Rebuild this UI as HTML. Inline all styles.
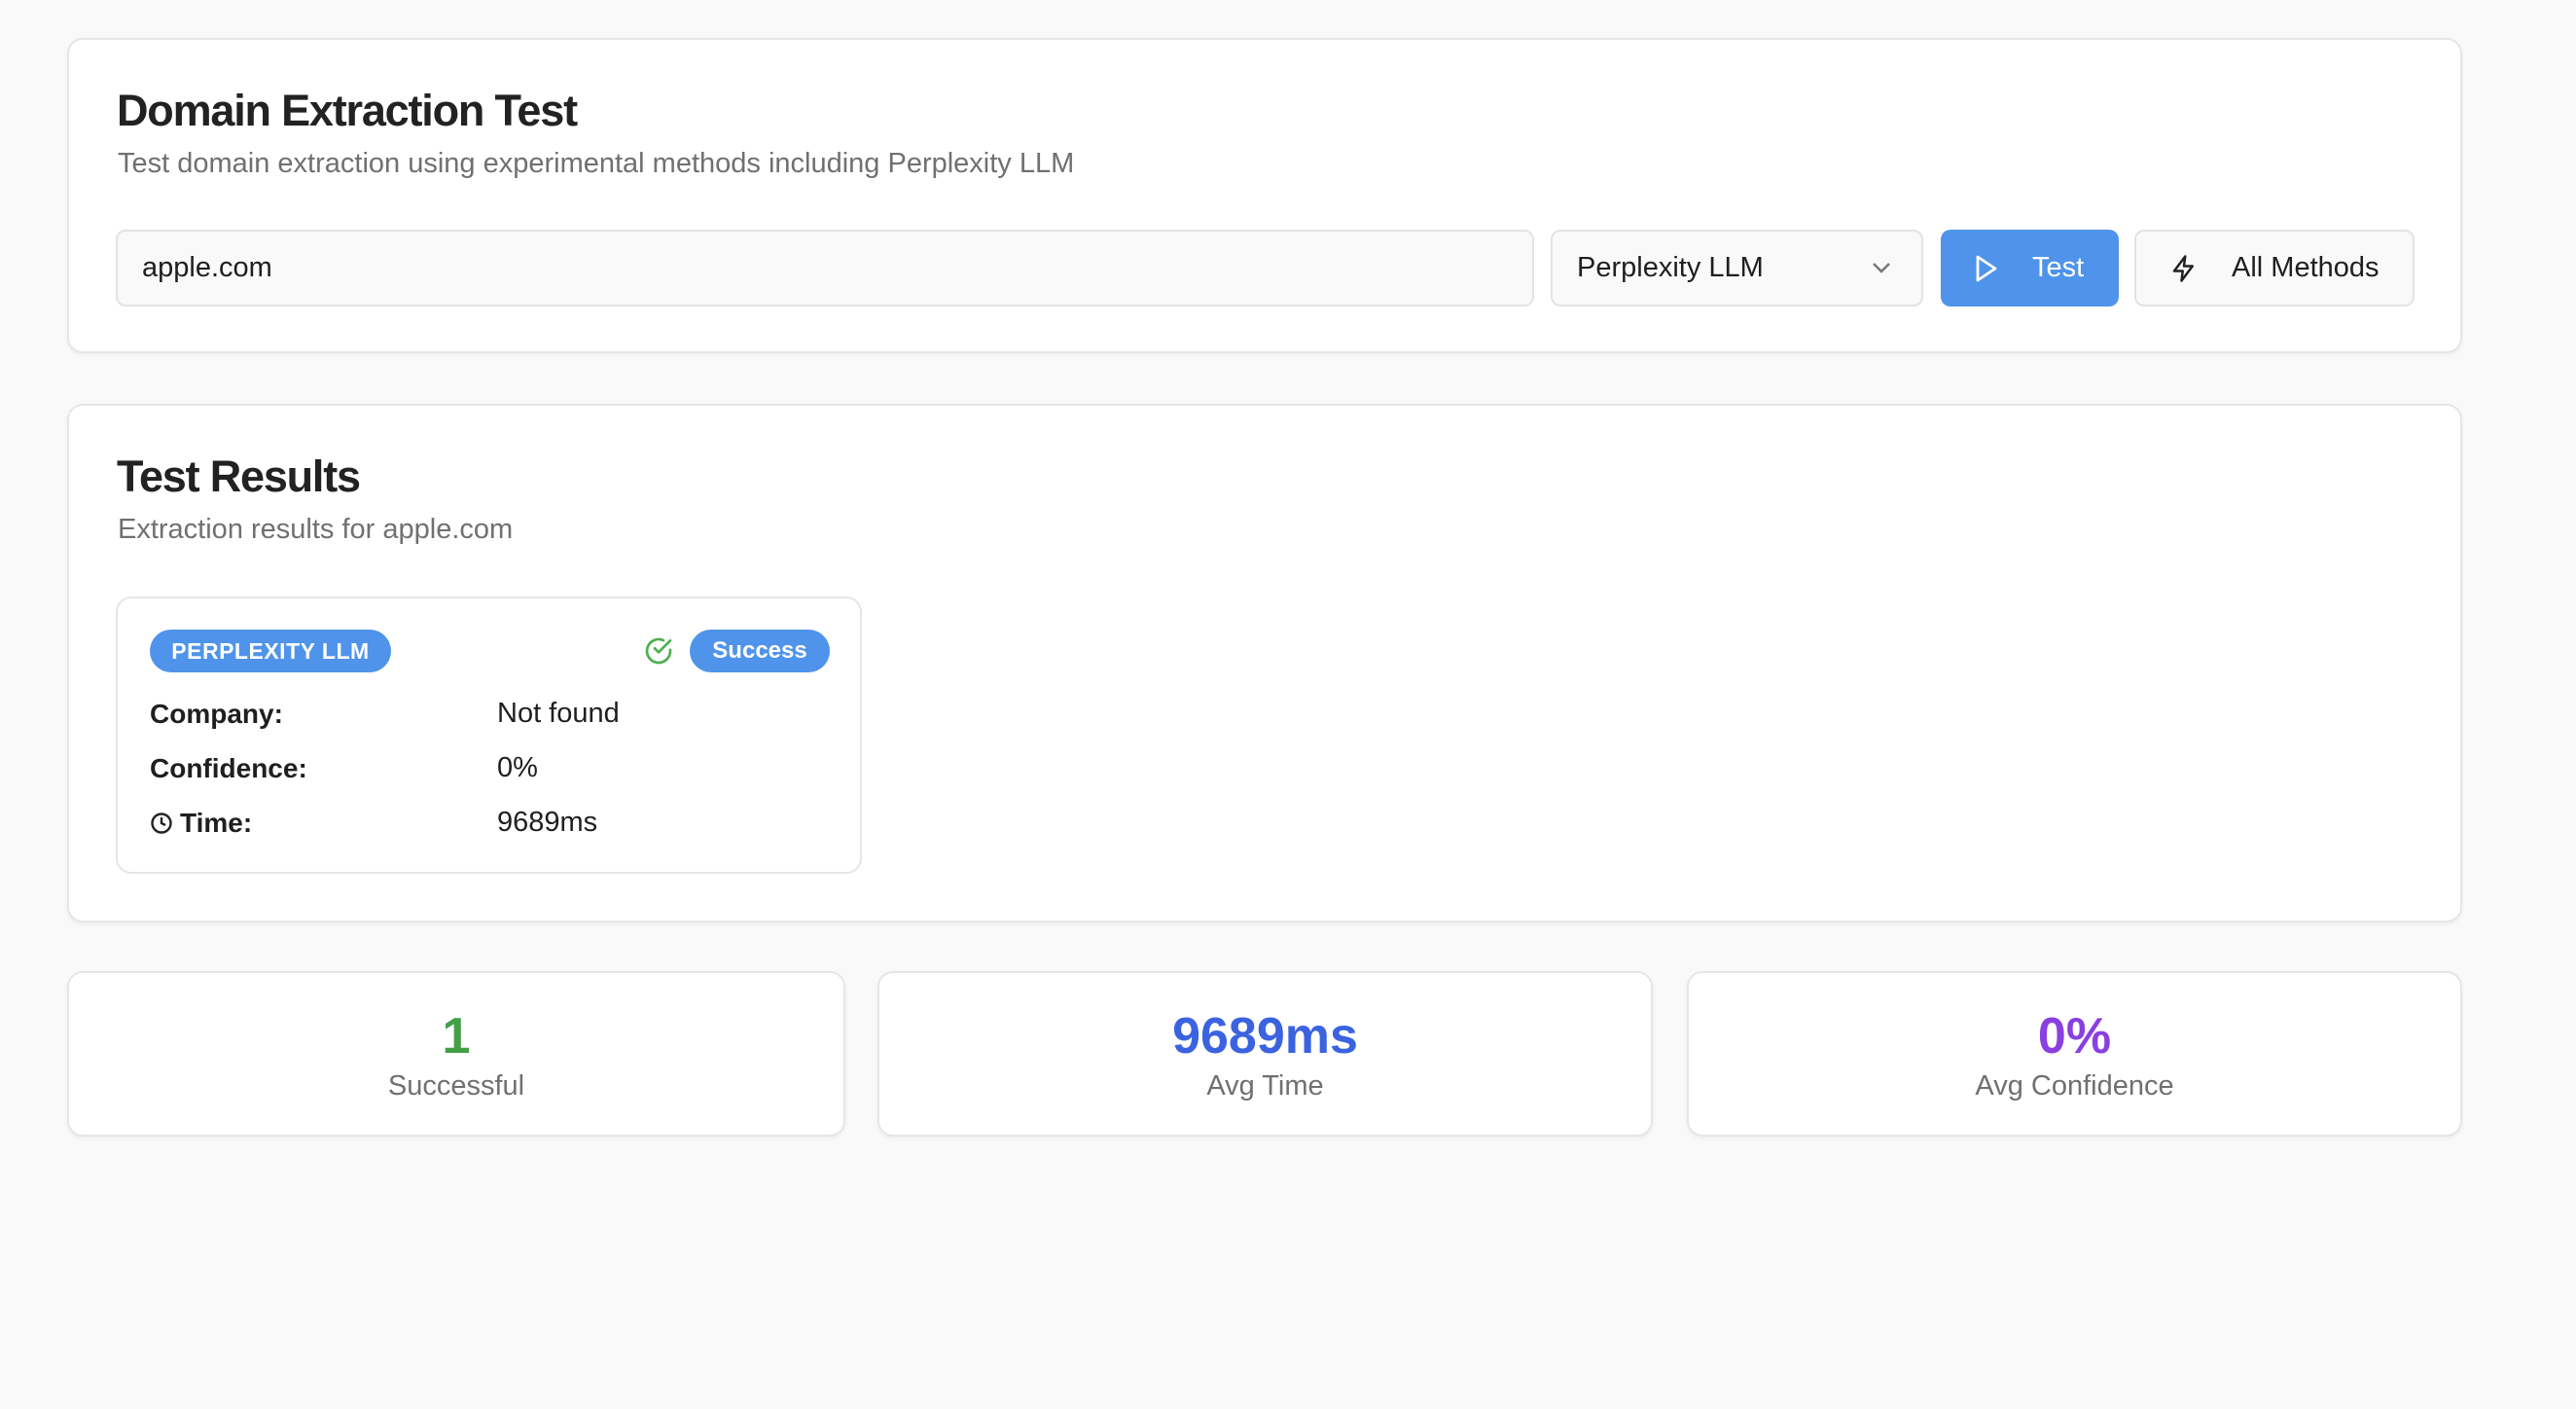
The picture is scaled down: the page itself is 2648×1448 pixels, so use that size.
<!DOCTYPE html>
<html><head><meta charset="utf-8"><style>
*{box-sizing:border-box;margin:0;padding:0}
body{width:2648px;height:1448px;background:#f9f9f9;font-family:"Liberation Sans",Arial,sans-serif;color:#1f1f1f;position:relative;overflow:hidden}
.card{position:absolute;background:#fff;border:2px solid #e6e6e6;border-radius:16px;box-shadow:0 2px 4px rgba(0,0,0,.05)}
.abs{position:absolute;white-space:nowrap}
h1{font-size:45px;font-weight:700;letter-spacing:-1.2px;color:#222}
.sub{font-size:29px;color:#707070}
.field{position:absolute;background:#f9f9f9;border:2px solid #e3e3e3;border-radius:10px;font-size:29px;display:flex;align-items:center}
.badge{position:absolute;background:#4f94ea;color:#fff;border-radius:22px;font-size:23px;font-weight:700;display:flex;align-items:center;justify-content:center;letter-spacing:.5px}
.lbl{font-size:28px;font-weight:700}
.val{font-size:29px}
.num{font-size:52px;font-weight:700;text-align:center;width:100%}
.cap{font-size:29px;color:#707070;text-align:center;width:100%}
</style></head><body>
<div class="card" style="left:69px;top:39px;width:2462px;height:324px">
  <h1 class="abs" style="left:49px;top:47px">Domain Extraction Test</h1>
  <div class="abs sub" style="left:50px;top:111px">Test domain extraction using experimental methods including Perplexity LLM</div>
</div>
<div class="field" style="left:119px;top:236px;width:1458px;height:79px;padding-left:25px">apple.com</div>
<div class="field" style="left:1594px;top:236px;width:383px;height:79px;padding-left:25px">Perplexity LLM
  <svg style="position:absolute;right:30px;top:30px" width="22" height="14" viewBox="0 0 22 14"><path d="M3 3l8 8 8-8" fill="none" stroke="#777" stroke-width="2.5"/></svg></div>
<div class="abs" style="left:1995px;top:236px;width:183px;height:79px;background:#4f94ea;border-radius:10px;color:#fff;font-size:29px;display:flex;align-items:center">
  <svg style="margin-left:34px" width="26" height="30" viewBox="0 0 26 30"><path d="M4 3L22 15L4 27Z" fill="none" stroke="#fff" stroke-width="2.8" stroke-linejoin="round"/></svg>
  <span style="margin-left:34px">Test</span></div>
<div class="field" style="left:2194px;top:236px;width:288px;height:79px;background:#f9f9f9">
  <svg style="margin-left:34px" width="30" height="34" viewBox="0 0 24 24"><path d="M13 2L4 14h7l-1 8 9-12h-7z" fill="none" stroke="#222" stroke-width="2" stroke-linejoin="round"/></svg>
  <span style="margin-left:34px">All Methods</span></div>

<div class="card" style="left:69px;top:415px;width:2462px;height:533px">
  <h1 class="abs" style="left:49px;top:47px">Test Results</h1>
  <div class="abs sub" style="left:50px;top:111px">Extraction results for apple.com</div>
</div>
<div class="card" style="left:119px;top:613px;width:767px;height:285px;box-shadow:none">
  <div class="badge" style="left:33px;top:32px;width:248px;height:44px">PERPLEXITY LLM</div>
  <svg class="abs" style="left:540px;top:38px" width="32" height="32" viewBox="0 0 24 24"><path d="M21 11.1V12a9 9 0 1 1-5.3-8.2" fill="none" stroke="#4caf50" stroke-width="2" stroke-linecap="round"/><path d="M21 4L12 13l-3-3" fill="none" stroke="#4caf50" stroke-width="2" stroke-linecap="round" stroke-linejoin="round"/></svg>
  <div class="badge" style="left:588px;top:32px;width:144px;height:44px;font-size:24px;letter-spacing:0">Success</div>
  <div class="abs lbl" style="left:33px;top:103px">Company:</div><div class="abs val" style="left:390px;top:102px">Not found</div>
  <div class="abs lbl" style="left:33px;top:159px">Confidence:</div><div class="abs val" style="left:390px;top:158px">0%</div>
  <svg class="abs" style="left:33px;top:219px" width="24" height="24" viewBox="0 0 24 24"><circle cx="12" cy="12" r="9.5" fill="none" stroke="#222" stroke-width="2.4"/><path d="M12 6v6l4 2" fill="none" stroke="#222" stroke-width="2.4"/></svg>
  <div class="abs lbl" style="left:64px;top:215px">Time:</div><div class="abs val" style="left:390px;top:214px">9689ms</div>
</div>

<div class="card" style="left:69px;top:998px;width:800px;height:170px">
  <div class="abs num" style="top:35px;color:#43a047">1</div><div class="abs cap" style="top:100px">Successful</div></div>
<div class="card" style="left:902px;top:998px;width:797px;height:170px">
  <div class="abs num" style="top:35px;color:#3b63e0">9689ms</div><div class="abs cap" style="top:100px">Avg Time</div></div>
<div class="card" style="left:1734px;top:998px;width:797px;height:170px">
  <div class="abs num" style="top:35px;color:#8a3fe0">0%</div><div class="abs cap" style="top:100px">Avg Confidence</div></div>
</body></html>
